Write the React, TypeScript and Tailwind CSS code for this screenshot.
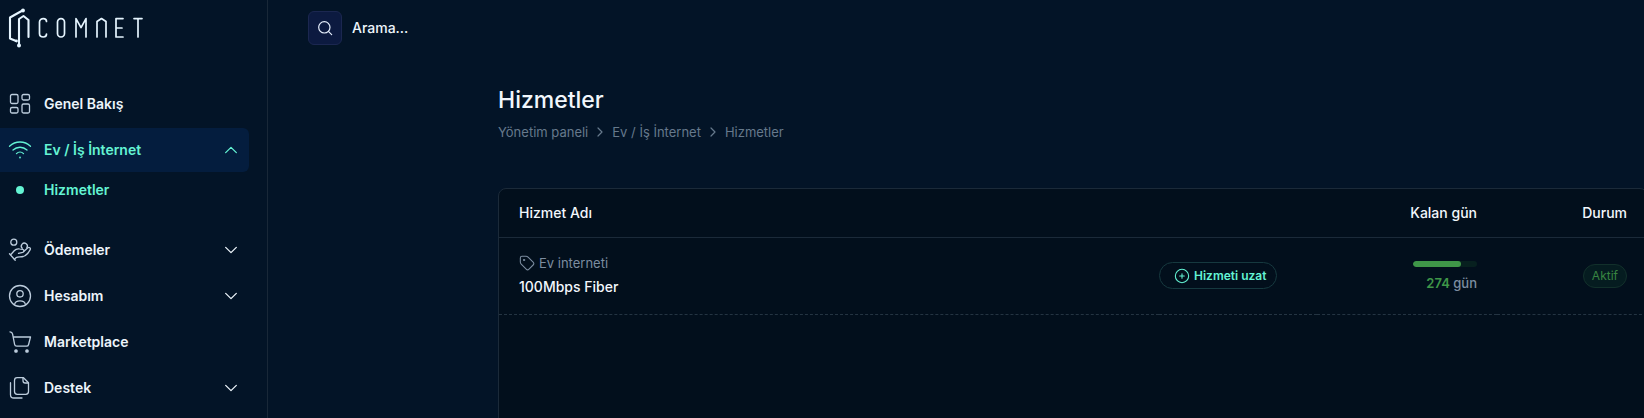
import React from 'react';

interface IconProps {
    className?: string;
    children: React.ReactNode;
}

const Icon: React.FC<IconProps> = ({ className = 'size-6', children }) => (
    <svg
        viewBox="0 0 24 24"
        fill="none"
        stroke="currentColor"
        strokeWidth="1.3"
        strokeLinecap="round"
        strokeLinejoin="round"
        aria-hidden="true"
        className={`shrink-0 ${className}`}
    >
        {children}
    </svg>
);

const Logo = () => (
    <svg
        viewBox="0 0 136 42"
        fill="none"
        stroke="currentColor"
        strokeLinecap="round"
        strokeLinejoin="round"
        className="h-[42px] w-[136px] text-[#e6f5ff]"
        role="img"
        aria-label="Comnet"
    >
        <g strokeWidth="2.1">
            <path d="M14.5 4.5 2 11.5v21l6 2.5" />
            <path d="M11 39.5V13l4.5-3 5 4v17" />
        </g>
        <g fill="currentColor" stroke="none">
            <circle cx="15" cy="4.500" r="1.900" />
            <circle cx="8.500" cy="35" r="1.400" />
            <circle cx="11" cy="39.500" r="2" />
        </g>
        <g strokeWidth="1.700">
            <path d="M38.500 15.500C38.500 13.500 37 12.600 35.300 12.600S31.500 13.800 31.500 16v11.500c0 2.400 1.600 3.500 3.800 3.500s3.200-1 3.200-3" />
            <rect x="49.500" y="12.600" width="7" height="18.400" rx="3.500" />
            <path d="M68 31V12.600l5 9 5-9V31" />
            <path d="M89 31V15.500l4.500-3 4.500 3V31" />
            <path d="M115 12.600h-7V31h7M108 22h6" />
            <path d="M126 12.600h8M130 12.600V31" />
        </g>
    </svg>
);

const DashboardIcon = () => (
    <Icon>
        <rect x="2.500" y="2.500" width="7.500" height="9" rx="1.500" />
        <rect x="14" y="2.500" width="7.500" height="5.500" rx="1.500" />
        <rect x="2.500" y="15.500" width="7.500" height="5.500" rx="1.500" />
        <rect x="14" y="12" width="7.500" height="9" rx="1.500" />
    </Icon>
);

const WifiIcon = () => (
    <Icon>
        <path d="M1.500 8.200c6-5.600 15-5.600 21 0" />
        <path d="M5 12c4-3.700 10-3.700 14 0" />
        <path d="M8.500 15.600c2-1.900 5-1.900 7 0" />
        <circle cx="12" cy="19.500" r="0.900" fill="currentColor" stroke="none" />
    </Icon>
);

const PaymentIcon = () => (
    <Icon>
        <circle cx="5.800" cy="4.200" r="3" />
        <path d="M14.200 10.200a3 3 0 1 1 4.600-.4" />
        <path d="m1.500 15.800 5.700 6.500M2.500 17l3.700-4.200c1.400-1.600 3.300-2.300 5.300-1.900l3.200.5c1.700.3 1.600 2.600 0 3l-4.200.9" />
        <path d="m15.700 13.500 4.200-3.800c1.200-1 3.100.4 2.300 1.900-1.600 3.100-4 6-7 6.900-2.600.7-5 .1-7.100 1.100L6.500 21.300" />
    </Icon>
);

const UserIcon = () => (
    <Icon>
        <circle cx="12" cy="12" r="10.500" />
        <circle cx="12" cy="9.800" r="3.200" />
        <path d="M6.700 20.200c.4-2.400 2.500-3.400 5.300-3.400s4.900 1 5.300 3.400" />
    </Icon>
);

const CartIcon = () => (
    <Icon>
        <path d="M2 1.800c1.700.2 2.300.8 2.600 2.300l2 10.300c.2 1.300.8 1.800 2.200 1.800h9.700c1.200 0 1.800-.5 2.100-1.700L22.500 7H5.200" />
        <circle cx="8" cy="21" r="1.200" fill="currentColor" />
        <circle cx="19" cy="21" r="1.200" fill="currentColor" />
    </Icon>
);

const DocumentsIcon = () => (
    <Icon>
        <path d="M15.500 1.700H9.200c-1.700 0-2.700 1-2.700 2.700v11.200c0 1.700 1 2.700 2.700 2.700h8.600c1.700 0 2.700-1 2.700-2.700V6.700z" />
        <path d="M15 2v2.800c0 1.300.8 2.200 2.200 2.200h3" />
        <path d="M2.500 6.700v12c0 2 1.200 3.300 3.300 3.300H14" />
    </Icon>
);

const Chevron = ({ open = false }: { open?: boolean }) => (
    <Icon className="size-4">
        {open ? <path d="m4 16 8-8 8 8" strokeWidth="1.900" /> : <path d="m4 8 8 8 8-8" strokeWidth="1.900" />}
    </Icon>
);

interface NavItemProps {
    label: string;
    icon: React.ReactNode;
    expandable?: boolean;
    active?: boolean;
}

const NavItem: React.FC<NavItemProps> = ({ label, icon, expandable = false, active = false }) => {
    const style = active
        ? 'bg-[#041d3e] text-[#64f4d4]'
        : 'text-[#edf5fb]';
    const content = (
        <>
            <span className={active ? '' : 'text-[#bdcddd]'}>{icon}</span>
            <span className="flex-1">{label}</span>
            {expandable && <Chevron open={active} />}
        </>
    );
    const classes = `flex h-11 w-full items-center gap-3 rounded-r-md pr-[10px] pl-2 text-left text-sm font-semibold ${style}`;

    return expandable ? (
        <button type="button" aria-expanded={active} className={classes}>{content}</button>
    ) : (
        <a href="#" className={classes}>{content}</a>
    );
};

const Sidebar = () => (
    <aside className="flex w-[268px] shrink-0 flex-col border-r border-[#192838] pr-[18px]">
        <a href="#" className="mt-[6px] ml-2">
            <Logo />
        </a>
        <nav className="mt-[34px] flex flex-col gap-[2px]">
            <NavItem label="Genel Bakış" icon={<DashboardIcon />} />
            <NavItem label="Ev / İş İnternet" icon={<WifiIcon />} expandable active />
            <a href="#" className="mb-5 flex h-8 items-center gap-3 pl-2 text-sm font-semibold text-[#64f4d4]">
                <span className="flex size-6 items-center justify-center">
                    <span className="size-2 rounded-full bg-[#64f4d4]" />
                </span>
                Hizmetler
            </a>
            <NavItem label="Ödemeler" icon={<PaymentIcon />} expandable />
            <NavItem label="Hesabım" icon={<UserIcon />} expandable />
            <NavItem label="Marketplace" icon={<CartIcon />} />
            <NavItem label="Destek" icon={<DocumentsIcon />} expandable />
        </nav>
    </aside>
);

const SearchBar = () => (
    <form role="search" className="flex items-center gap-[10px] px-10 pt-[11px]">
        <button
            type="submit"
            aria-label="Ara"
            className="flex size-[34px] items-center justify-center rounded-md border border-[#1b2750] bg-[#0c1a40] text-[#e5eefb]"
        >
            <Icon className="size-4">
                <circle cx="11" cy="11" r="8.500" strokeWidth="1.800" />
                <path d="m17.500 17.500 4.500 4.500" strokeWidth="1.800" />
            </Icon>
        </button>
        <input
            type="text"
            aria-label="Arama"
            placeholder="Arama..."
            className="flex-1 bg-transparent text-sm font-medium text-white outline-none placeholder:text-[#edf5fb]"
        />
    </form>
);

const Breadcrumbs = () => {
    const items = ['Yönetim paneli', 'Ev / İş İnternet', 'Hizmetler'];

    return (
        <nav aria-label="breadcrumb" className="mt-[6px] flex items-center text-[13px] leading-5 text-[#66798c]">
            {items.map((item, index) => (
                <React.Fragment key={item}>
                    {index > 0 && (
                        <Icon className="mx-[6px] size-3">
                            <path d="m8 4 8 8-8 8" strokeWidth="2.400" />
                        </Icon>
                    )}
                    <a href="#">{item}</a>
                </React.Fragment>
            ))}
        </nav>
    );
};

const services = [
    { name: '100Mbps Fiber', type: 'Ev interneti', daysLeft: 274, totalDays: 365, status: 'Aktif' },
];

const ServiceTable = () => (
    <div className="mt-[46px] -mr-1 min-h-[400px] rounded-lg border border-[#1b2a39] bg-[#020f1c]">
        <table className="w-full border-collapse text-sm">
            <thead>
                <tr className="h-12 border-b border-[#1b2a39] text-[#f2f7fc]">
                    <th className="px-5 text-left font-medium">Hizmet Adı</th>
                    <td className="w-[158px]" />
                    <th className="w-[180px] px-5 text-right font-medium">Kalan gün</th>
                    <th className="w-[150px] px-5 text-right font-medium">Durum</th>
                </tr>
            </thead>
            <tbody>
                {services.map((service) => (
                    <tr key={service.name} className="h-[77px] border-b border-dashed border-[#243442]">
                        <td className="px-5 pb-[2px]">
                            <div className="flex items-center gap-1 text-[13px] leading-6 text-[#7c8da0]">
                                <Icon className="size-4">
                                    <path d="M2 4.500C2 3 3 2 4.500 2h6c1.300 0 2.200.4 3.100 1.300l7.600 7.500c1.300 1.300 1.300 2.900 0 4.200l-6.200 6.200c-1.300 1.300-2.900 1.300-4.200 0l-7.500-7.600C2.400 12.700 2 11.800 2 10.500z" strokeWidth="1.600" />
                                    <circle cx="7.500" cy="7.500" r="1" fill="currentColor" />
                                </Icon>
                                {service.type}
                            </div>
                            <div className="leading-6 font-medium text-[#f2f7fc]">{service.name}</div>
                        </td>
                        <td>
                            <button
                                type="button"
                                className="flex h-[27px] items-center gap-1 rounded-full border border-[#16393f] pr-[10px] pl-[14px] text-xs font-semibold text-[#64f4d4]"
                            >
                                <Icon className="size-4">
                                    <circle cx="12" cy="12" r="10" strokeWidth="1.600" />
                                    <path d="M12 8.500v7M8.500 12h7" strokeWidth="1.600" />
                                </Icon>
                                Hizmeti uzat
                            </button>
                        </td>
                        <td className="px-5 pt-1">
                            <div className="ml-auto h-[6px] w-16 overflow-hidden rounded-full bg-[#07201f]">
                                <div
                                    className="h-full rounded-full bg-[#3f9648]"
                                    style={{ width: `${(service.daysLeft / service.totalDays) * 100}%` }}
                                />
                            </div>
                            <div className="mt-1 text-right text-[13px] leading-6 font-medium text-[#7c8da0]">
                                <span className="font-semibold text-[#3f9648]">{service.daysLeft}</span> gün
                            </div>
                        </td>
                        <td className="px-5 text-right">
                            <span className="inline-flex h-6 items-center rounded-full border border-[#12302b] bg-[#051c20] px-2 text-xs text-[#388541]">
                                {service.status}
                            </span>
                        </td>
                    </tr>
                ))}
            </tbody>
        </table>
    </div>
);

const App: React.FC = () => (
    <div className="flex h-screen overflow-hidden bg-[#031427] font-['Inter',sans-serif]">
        <Sidebar />
        <main className="min-w-0 flex-1 overflow-hidden">
            <SearchBar />
            <div className="pt-[39px] pl-[230px]">
                <h1 className="text-[23px] leading-8 font-medium text-[#f2f7fc]">Hizmetler</h1>
                <Breadcrumbs />
                <ServiceTable />
            </div>
        </main>
    </div>
);

export default App;
